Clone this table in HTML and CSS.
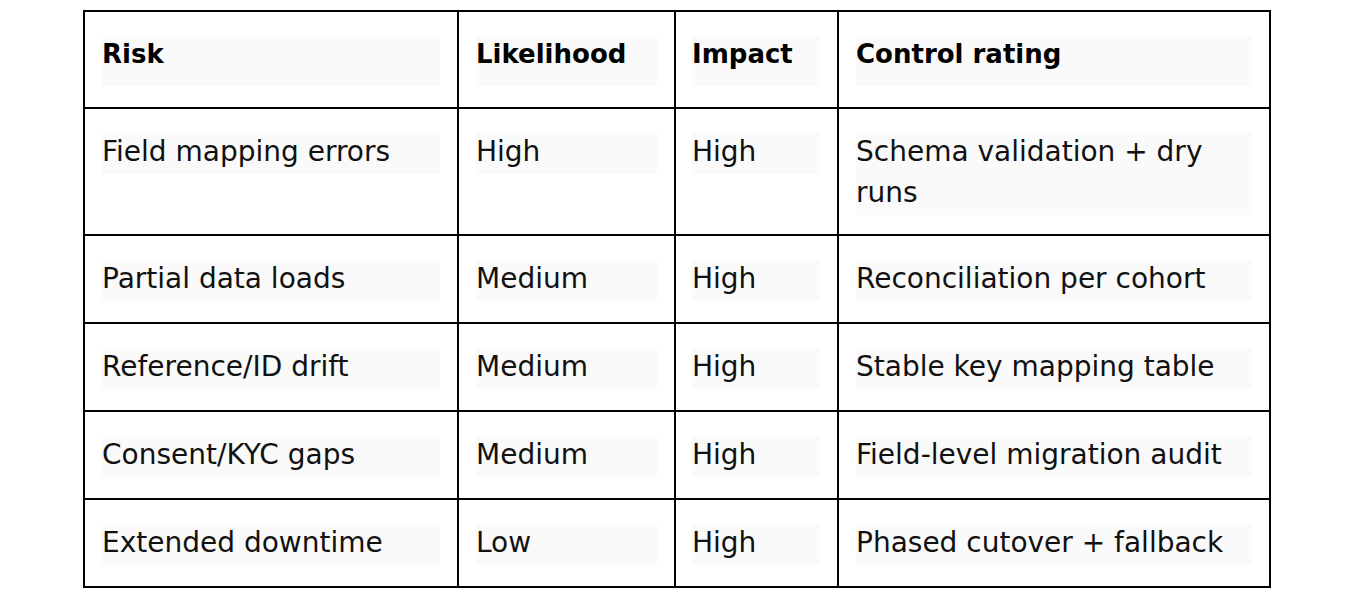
FILE: index.html
```html
<!DOCTYPE html>
<html lang="en">
<head>
<meta charset="utf-8">
<title>Migration risks</title>
<link rel="stylesheet" href="styles.css">
</head>
<body>
<div class="page">
  <div class="risk-table" role="table">
    <div class="cell head" role="columnheader"><div class="txt"><div class="line">Risk</div></div></div>
    <div class="cell head" role="columnheader"><div class="txt"><div class="line">Likelihood</div></div></div>
    <div class="cell head narrow" role="columnheader"><div class="txt"><div class="line">Impact</div></div></div>
    <div class="cell head" role="columnheader"><div class="txt"><div class="line">Control rating</div></div></div>

    <div class="cell" role="cell"><div class="txt"><div class="line">Field mapping errors</div></div></div>
    <div class="cell" role="cell"><div class="txt"><div class="line">High</div></div></div>
    <div class="cell narrow" role="cell"><div class="txt"><div class="line">High</div></div></div>
    <div class="cell" role="cell"><div class="txt"><div class="line">Schema validation + dry runs</div></div></div>

    <div class="cell" role="cell"><div class="txt"><div class="line">Partial data loads</div></div></div>
    <div class="cell" role="cell"><div class="txt"><div class="line">Medium</div></div></div>
    <div class="cell narrow" role="cell"><div class="txt"><div class="line">High</div></div></div>
    <div class="cell" role="cell"><div class="txt"><div class="line">Reconciliation per cohort</div></div></div>

    <div class="cell" role="cell"><div class="txt"><div class="line">Reference/ID drift</div></div></div>
    <div class="cell" role="cell"><div class="txt"><div class="line">Medium</div></div></div>
    <div class="cell narrow" role="cell"><div class="txt"><div class="line">High</div></div></div>
    <div class="cell" role="cell"><div class="txt"><div class="line">Stable key mapping table</div></div></div>

    <div class="cell" role="cell"><div class="txt"><div class="line">Consent/KYC gaps</div></div></div>
    <div class="cell" role="cell"><div class="txt"><div class="line">Medium</div></div></div>
    <div class="cell narrow" role="cell"><div class="txt"><div class="line">High</div></div></div>
    <div class="cell" role="cell"><div class="txt"><div class="line">Field-level migration audit</div></div></div>

    <div class="cell" role="cell"><div class="txt"><div class="line">Extended downtime</div></div></div>
    <div class="cell" role="cell"><div class="txt"><div class="line">Low</div></div></div>
    <div class="cell narrow" role="cell"><div class="txt"><div class="line">High</div></div></div>
    <div class="cell" role="cell"><div class="txt"><div class="line">Phased cutover + fallback</div></div></div>
  </div>
</div>
</body>
</html>
```
FILE: styles.css
```css
html, body {
  margin: 0;
  padding: 0;
  background: #ffffff;
}

.page {
  padding: 10px 0 0 83px;
}

.risk-table {
  display: grid;
  width: 1188px;
  box-sizing: border-box;
  grid-template-columns: 372px 215px 161px 430px;
  grid-template-rows: 95px 125px 86px 86px 86px 86px;
  gap: 2px;
  padding: 2px;
  background: #000000;
  font-family: "DejaVu Sans", "Noto Sans", sans-serif;
  color: #111111;
}

.cell {
  background: #ffffff;
  padding: 24px 17px 0 17px;
}

.cell.narrow {
  padding-left: 16px;
}

.txt {
  display: flow-root;
  background: #fafafa;
  font-size: 28px;
  line-height: 41px;
  font-weight: 400;
  padding-bottom: 2px;
}

.line {
  margin-top: -2px;
}

.head .txt {
  font-size: 26px;
  font-weight: 700;
  color: #000000;
  padding-bottom: 11px;
}
```
